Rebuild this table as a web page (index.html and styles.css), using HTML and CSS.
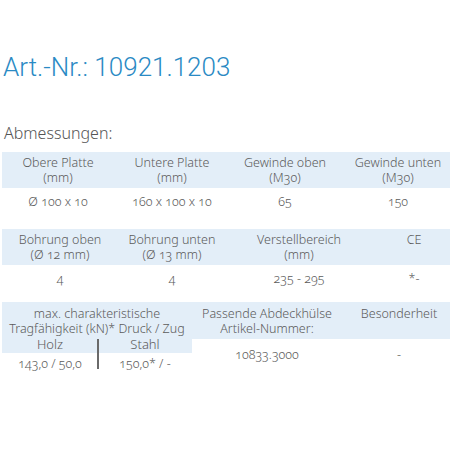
FILE: index.html
```html
<!DOCTYPE html>
<html lang="de">
<head>
<meta charset="utf-8">
<link rel="stylesheet" href="styles.css">
</head>
<body>
<div class="page">
  <h1 class="title">Art.-Nr.: 10921.1203</h1>
  <h2 class="section">Abmessungen:</h2>

  <div class="grid grid-a">
    <div class="hd">Obere Platte<br>(mm)</div>
    <div class="hd">Untere Platte<br>(mm)</div>
    <div class="hd">Gewinde oben<br>(M30)</div>
    <div class="hd">Gewinde unten<br>(M30)</div>
    <div class="cell">Ø 100 x 10</div>
    <div class="cell">160 x 100 x 10</div>
    <div class="cell">65</div>
    <div class="cell">150</div>
  </div>

  <div class="grid grid-b">
    <div class="hd">Bohrung oben<br>(Ø 12 mm)</div>
    <div class="hd">Bohrung unten<br>(Ø 13 mm)</div>
    <div class="hd">Verstellbereich<br>(mm)</div>
    <div class="hd">CE</div>
    <div class="cell">4</div>
    <div class="cell">4</div>
    <div class="cell">235 - 295</div>
    <div class="cell">*-</div>
  </div>

  <div class="grid grid-c">
    <div class="load">
      <div class="load-hd">max. charakteristische<br>Tragfähigkeit (kN)* Druck / Zug</div>
      <div class="load-sub">
        <div class="sub-hd">Holz</div>
        <div class="sub-hd">Stahl</div>
      </div>
      <div class="load-data">
        <div class="sub-cell">143,0 / 50,0</div>
        <div class="sub-cell">150,0* / -</div>
      </div>
      <div class="divider"></div>
    </div>
    <div class="col">
      <div class="hd hd-c">Passende Abdeckhülse<br>Artikel-Nummer:</div>
      <div class="cell cell-c">10833.3000</div>
    </div>
    <div class="col">
      <div class="hd hd-c">Besonderheit</div>
      <div class="cell cell-c">-</div>
    </div>
  </div>
</div>
</body>
</html>
```

FILE: styles.css
```css
html, body {
  margin: 0;
  padding: 0;
  background: #ffffff;
  overflow: hidden;
}
.page {
  width: 456px;
  padding: 0 0 0 2px;
  font-family: "Noto Sans", "Open Sans", sans-serif;
  font-weight: 300;
  color: #5b5b5b;
  font-variant-numeric: oldstyle-nums;
}
.title {
  margin: 0;
  padding: 52px 0 0 1px;
  font-family: Roboto, "Liberation Sans", sans-serif;
  font-weight: 300;
  font-size: 26px;
  line-height: 31px;
  color: #2a8ac4;
  font-variant-numeric: lining-nums;
}
.section {
  margin: 0;
  padding: 40px 0 0 2px;
  font-size: 16px;
  font-weight: 300;
  line-height: 20px;
  height: 29px;
  color: #555;
}
.grid {
  display: grid;
  width: 454px;
  font-size: 12.5px;
  line-height: 15px;
  text-align: center;
}
.grid-a {
  grid-template-columns: 112px 116px 110px 116px;
}
.grid-b {
  margin-top: 11px;
  grid-template-columns: 116px 108px 146px 84px;
}
.hd {
  background: #e3eef8;
  height: 36px;
  padding-top: 3px;
  box-sizing: border-box;
}
.cell {
  height: 30px;
  padding-top: 6px;
  box-sizing: border-box;
}
.grid-c {
  margin-top: 7px;
  grid-template-columns: 190px 150px 114px;
}
.load {
  position: relative;
}
.load-hd {
  background: #e3eef8;
  padding-top: 4px;
  height: 35px;
  box-sizing: border-box;
}
.load-sub, .load-data {
  display: grid;
  grid-template-columns: 96px 94px;
}
.sub-hd {
  background: #e3eef8;
  height: 16px;
  line-height: 15px;
  font-size: 13px;
}
.sub-cell {
  height: 24px;
  padding-top: 3px;
  box-sizing: border-box;
}
.divider {
  position: absolute;
  left: 95px;
  top: 37px;
  width: 2px;
  height: 30px;
  background: #6a6a6a;
}
.col .hd-c {
  height: 37px;
  padding-top: 4px;
}
.cell-c {
  padding-top: 8px;
}
```
